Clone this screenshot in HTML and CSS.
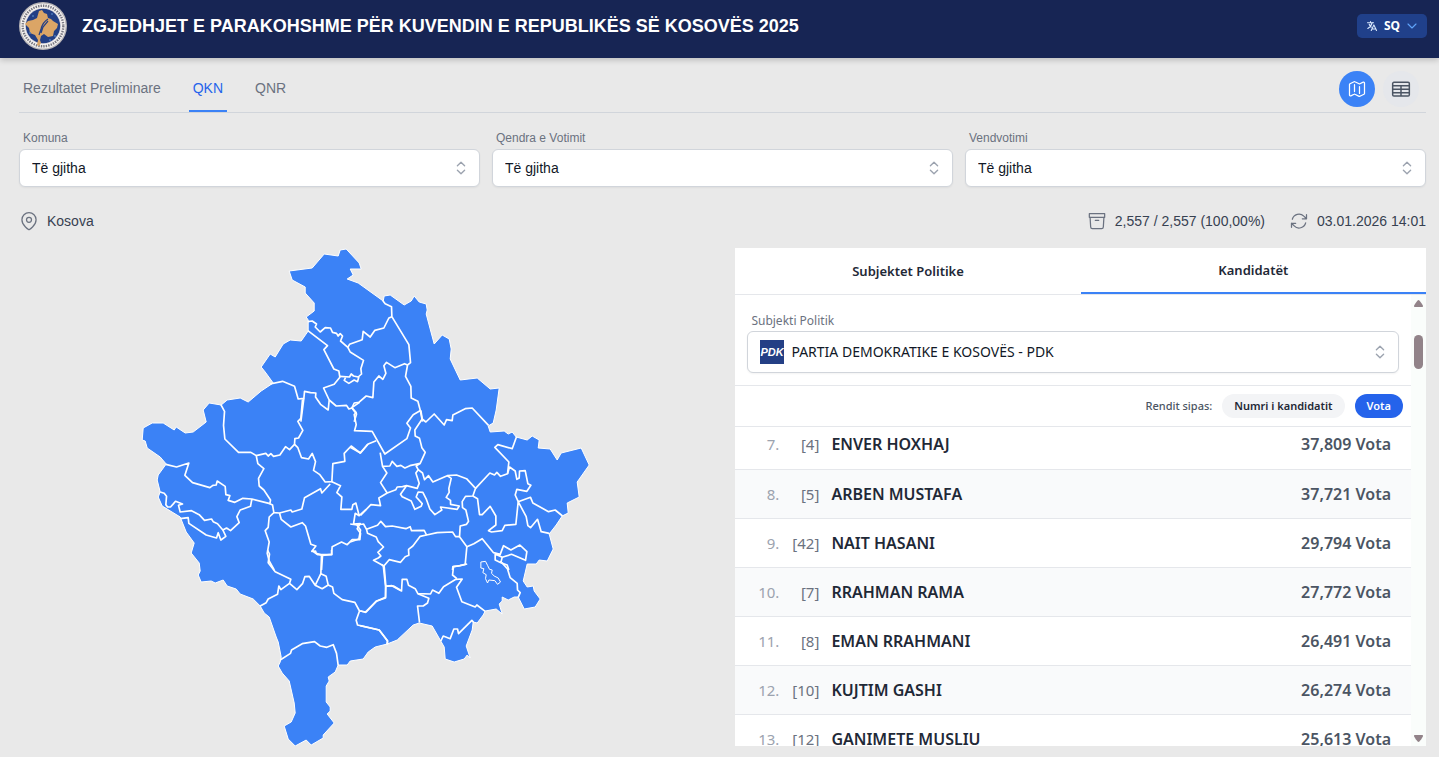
FILE: index.html
```html
<!DOCTYPE html>
<html lang="sq">
<head>
  <meta charset="UTF-8">
  <meta name="viewport" content="width=device-width, initial-scale=1">
  <title>Zgjedhjet e Parakohshme 2025</title>
  <link rel="stylesheet" href="styles.css">
</head>
<body>
  <header class="header">
    <svg class="seal" viewBox="0 0 48 48" aria-hidden="true">
      <circle cx="24" cy="24" r="24" fill="#b9b6b8"/>
      <circle cx="24" cy="24" r="22.6" fill="#f4f1ef"/>
      <circle cx="24" cy="24" r="20.3" fill="none" stroke="#77767f" stroke-width="2.4" stroke-dasharray="1.4 1.1"/>
      <circle cx="24" cy="24" r="18" fill="#d9d6dc"/>
      <circle cx="24" cy="24" r="17.2" fill="#233f85"/>
      <path fill="#dba566" d="M20 9l3-1 2 3 3 1 1 4 3 1 2 2 5 3-1 4-3 3-1 5-5 1-4-3-3 2-1 4 1 3-2 3-2-1 1-5-3-5-5-2-1-5-4-4 3-3 5-1 4-2z"/>
      <path d="M29 17c-5 3-6 6-7 10l-2 6M29 19l-5 6-2 6" fill="none" stroke="#233f85" stroke-width="1.2"/>
      <g fill="#4c78b8"><circle cx="14" cy="14" r="1"/><circle cx="33" cy="12" r="1"/><circle cx="11" cy="31" r="1"/><circle cx="36" cy="34" r="1"/><circle cx="31" cy="38" r="1"/></g>
    </svg>
    <h1 class="title">ZGJEDHJET E PARAKOHSHME PËR KUVENDIN E REPUBLIKËS SË KOSOVËS 2025</h1>
    <button class="lang" type="button">
      <svg width="12" height="12" viewBox="0 0 24 24" fill="none" stroke="#dbeafe" stroke-width="2.2" stroke-linecap="round" stroke-linejoin="round"><path d="M10.5 21l5.250-11.250L21 21m-9-3h7.500M3 5.600a48.500 48.500 0 0 1 12 0M9 3v2.300m3.300 0C11.200 10.300 7.900 14.500 3.600 17M12.300 5.300c.9.100 1.800.200 2.700.300M10.400 14.500A18 18 0 0 1 6.400 8.500"/></svg>
      <span>SQ</span>
      <svg width="12" height="12" viewBox="0 0 24 24" fill="none" stroke="#60a5fa" stroke-width="2.2" stroke-linecap="round" stroke-linejoin="round"><path d="M4 8l8 8 8-8"/></svg>
    </button>
  </header>

  <main class="page">
    <div class="nav-row">
      <nav class="nav">
        <a href="#preliminare">Rezultatet Preliminare</a>
        <a href="#qkn" class="active">QKN</a>
        <a href="#qnr">QNR</a>
      </nav>
      <div class="view-buttons">
        <button class="round active" type="button" aria-label="Harta">
          <svg width="20" height="20" viewBox="0 0 24 24" fill="none" stroke="currentColor" stroke-width="1.5" stroke-linecap="round" stroke-linejoin="round"><path d="M9 6.750V15m6-6v8.250m.5 3.500l4.900-2.400c.4-.2.600-.6.600-1V4.800c0-.8-.9-1.400-1.600-1l-3.900 1.900c-.3.200-.7.200-1 0L9.500 3.300a1.100 1.100 0 0 0-1 0L3.600 5.700c-.4.200-.6.600-.6 1v12.500c0 .8.900 1.400 1.600 1l3.900-1.900c.3-.2.700-.2 1 0l5 2.500c.3.200.7.200 1-.1z"/></svg>
        </button>
        <button class="round" type="button" aria-label="Tabela">
          <svg width="20" height="20" viewBox="0 0 24 24" fill="none" stroke="currentColor" stroke-width="1.8" stroke-linejoin="round"><rect x="2" y="4" width="20" height="16.500" rx="1.500"/><path d="M2 8h20M2 12.200h20M2 16.400h20M12 8v12.500"/></svg>
        </button>
      </div>
    </div>

    <form class="filters">
      <div class="field">
        <label for="komuna">Komuna</label>
        <div class="select-box">
          <select id="komuna"><option>Të gjitha</option></select>
          <svg class="updown" viewBox="0 0 20 20"><path d="M6 7.500L10 3.500l4 4M6 12.500l4 4 4-4"/></svg>
        </div>
      </div>
      <div class="field">
        <label for="qendra">Qendra e Votimit</label>
        <div class="select-box">
          <select id="qendra"><option>Të gjitha</option></select>
          <svg class="updown" viewBox="0 0 20 20"><path d="M6 7.500L10 3.500l4 4M6 12.500l4 4 4-4"/></svg>
        </div>
      </div>
      <div class="field">
        <label for="vendvotimi">Vendvotimi</label>
        <div class="select-box">
          <select id="vendvotimi"><option>Të gjitha</option></select>
          <svg class="updown" viewBox="0 0 20 20"><path d="M6 7.500L10 3.500l4 4M6 12.500l4 4 4-4"/></svg>
        </div>
      </div>
    </form>

    <div class="info">
      <div class="info-item place">
        <svg viewBox="0 0 24 24"><path d="M15 10.500a3 3 0 1 1-6 0 3 3 0 0 1 6 0z"/><path d="M20.500 10.500C20.500 17.600 12 22.500 12 22.500S3.500 17.600 3.500 10.500a8.500 8.500 0 0 1 17 0z"/></svg>
        <span>Kosova</span>
      </div>
      <div class="info-item">
        <svg viewBox="0 0 24 24"><path d="M20.300 7.500l-.7 11.600a2 2 0 0 1-2 1.900H6.400a2 2 0 0 1-2-1.900L3.700 7.500M10 11.300h4M2.800 3.200h18.400v4.300H2.800z"/></svg>
        <span>2,557 / 2,557 (100,00%)</span>
      </div>
      <div class="info-item">
        <svg viewBox="0 0 24 24"><path d="M16 9.300h5V4.400M3 19.600v-4.900h5M3 14.700l3.200 3.200a8.200 8.200 0 0 0 13.800-3.700M4 9.900A8.200 8.200 0 0 1 17.800 6.200L21 9.300"/></svg>
        <span>03.01.2026 14:01</span>
      </div>
    </div>

    <div class="content">
      <div class="map">
        <svg viewBox="140 248 450 498" role="img" aria-label="Harta e Kosovës">
          <path class="country" d="M289 271L312 268 324 254 338 256 340 250 346 249 359 263 361 269 350 269 353 275 347 279 358 283 383 301 384 296 390 295 404 305 411 301 414 296 419 302 426 304 427 310 426 314 434 344 442 335 449 339 451 349 450 359 460 380 477 378 490 389 499 388 496 410 493 423 488 426 490 432 504 431 508 434 512 432 516 437 527 440 532 436 539 440 538 448 550 449 557 460 561 453 581 448 589 465 577 482 579 497 567 503 568 513 562 516 556 525 549 534 553 549 547 561 539 560 536 564 527 564 523 581 527 587 533 586 534 591 540 599 535 607 524 609 518 597 514 597 508 600 502 597 502 601 499 604 502 614 496 609 485 611 483 615 477 623 473 622 472 630 469 638 466 646 470 658 467 655 464 659 454 662 445 659 444 647 432 626 419 623 413 625 397 640 387 644 375 647 368 652 363 659 350 661 347 665 338 665 335 672 328 677 329 681 326 686 326 702 330 707 330 711 327 714 334 723 323 735 323 738 311 745 306 740 295 746 288 739 284 726 291 722 295 713 294 703 289 681 282 673 278 666 280 662 281 657 278 642 276 637 269 617 264 613 260 606 253 599 240 594 236 589 227 586 223 580 215 583 211 581 201 582 198 575 200 571 199 563 191 553 194 543 186 532 180 517 162 506 158 497 160 492 157 480 158 475 166 464 160 457 147 448 145 441 142 440 143 428 152 423 163 423 174 430 176 427 185 433 193 432 206 422 203 410 209 403 221 405 227 400 240 398 248 402 261 391 273 383 265 372 261 367 270 354 275 357 283 344 290 340 301 341 308 331 308 320 306 317 314 311 314 303 305 293 305 287 292 280Z"/>
          <!-- north -->
          <g class="border" transform="translate(270 240) scale(0.33333)">
            <path d="M338 182L345 191 364 200 365 230 416 314 421 368 412 375 406 409 422 439 423 474 443 484 450 510 457 545"/>
            <path d="M365 230L356 234 341 264 314 271 300 291 279 274 276 299 238 313 233 322 211 303 217 288 210 281 204 288 199 280 187 277 181 264 165 263 150 276 135 261 139 252 126 243 113 245"/>
            <path d="M113 272L172 317 161 329 191 387 206 393 209 412 192 433 160 444 177 480 174 510 151 493 136 471 137 459 121 458 103 454 101 475 84 477 73 439 37 424 0 432"/>
            <path d="M233 322L240 336 280 361 272 386 274 402 264 411 250 408 243 402 238 411 209 409M226 413L222 421 236 430 252 420 262 425 266 410"/>
            <path d="M177 480L198 498 229 496 236 507 245 504 252 489 266 487 288 468 308 473 311 426 326 408 338 418 347 400 341 377 349 367 374 383 403 371 412 375"/>
            <path d="M245 504L259 522 252 545M101 475L92 545"/>
          </g>
          <!-- west -->
          <g class="border" transform="translate(130 370) scale(0.33333)">
            <path d="M272 104L283 124 280 166 284 207 325 247 362 247 378 257 383 281 401 296 385 325 387 348 401 360 421 390 419 401 427 405 431 428 448 429 482 420 486 426 515 417 523 383 571 356 575 369 600 342"/>
            <path d="M378 257L407 250 414 258 422 251 430 259 449 255 466 230 478 239 493 223 494 206 505 204 518 181 503 154 512 145 517 88"/>
            <path d="M493 223L503 233 514 263 535 267 546 250 556 275 550 301 569 314 585 336 605 335 608 281 644 274 642 250 663 228 690 249 713 222"/>
            <path d="M605 335L631 347 620 368 635 381 632 418 665 418 668 404 677 399 687 437 708 418M687 437L675 430 670 462 690 461 681 476 691 490 689 509 666 509 651 524 634 516 606 530 604 553 577 556 574 600"/>
            <path d="M577 556L558 550 556 543 545 544 557 528 542 523 526 468 516 458 482 471 453 448 448 429"/>
            <path d="M431 428L417 441 414 472 405 482 417 516 411 550 417 573 432 600"/>
            <path d="M107 283L139 291 176 279 164 316 187 338 239 353 248 346 258 345 261 333 285 349 287 374 299 377 294 391 314 397 338 385 365 387 419 401M365 387L361 409 330 420 320 440 327 458 301 482 289 474 278 480 262 461 249 455 244 447 223 451 207 434 184 422 150 426 145 406 157 402 136 394 130 401 121 411 112 411 107 404 109 379 102 370 90 366"/>
            <path d="M278 480L287 499 272 510 264 488 259 504 228 495 176 460 174 443 150 446"/>
          </g>
          <!-- east -->
          <g class="border" transform="translate(350 370) scale(0.33333)">
            <path d="M212 121L216 147 227 156 252 132 282 165 289 149 306 152 308 135 345 116 366 114 415 166M212 121L189 134 170 160 181 174 170 206 104 252 66 184 13 182 18 164 12 134 18 128 5 113 28 97"/>
            <path d="M216 147L194 180 195 198 208 205 215 233 225 247 210 280 179 287 164 294 152 286 140 289 126 274 119 288 97 289 90 248"/>
            <path d="M97 289L110 309 91 338 111 369 137 359 141 351 157 350 169 347 201 355 207 340 197 309 204 299 198 288 210 280"/>
            <path d="M204 299L217 309 223 329 235 317 248 336 291 317 319 315 349 326 376 355 368 378 346 379 336 395 337 413 347 420 355 454 349 463 330 468 328 500 350 530 345 583 325 588 308 590 307 600"/>
            <path d="M291 317L303 325 296 355 297 367 288 382 301 391 301 403 327 408 321 418 271 411 275 420 254 434 239 417 229 389 218 367 204 366 198 381 216 401 213 409 194 418 183 393 156 380 151 373 169 347"/>
            <path d="M376 355L419 309 433 315 440 307 451 319 472 311 476 276 434 232 443 224 486 236 499 200"/>
            <path d="M472 311L478 291 495 303 500 328 507 324 508 303 525 302 533 341 542 346 530 364 500 358 495 375 504 395 541 382 548 399 595 425 615 420 637 438"/>
            <path d="M504 395L497 463 464 466 456 482 424 486 415 482 437 465 437 438 420 409 396 434 388 434 382 386 368 378M504 395L528 440 533 467 541 473 562 448 573 485 597 490"/>
            <path d="M111 369L86 384 91 407 62 404 31 436 M0 462L20 465 40 462 49 478 82 466 92 454 106 470 126 468 167 476 180 470 184 482 222 481 229 495 261 488 307 486 316 500 328 500"/>
            <path d="M49 478L52 490 78 501 84 515 100 531 83 547 92 558 84 564 70 571 101 588 117 569 151 577 165 560 176 556 175 538 188 528 210 499 229 495"/>
            <path d="M350 530L371 521 396 506 430 548 450 553 460 527 482 540 509 525 530 545 526 571 484 553 456 562 435 552 435 570 452 578 456 562M452 578L471 585 476 600"/>
            <path d="M0 232L31 249 54 222 78 212M20 465L31 480 26 507 0 516"/>
          </g>
          <!-- south-east -->
          <g class="border" transform="translate(360 500) scale(0.33333)">
            <path d="M69 195L76 259 76 292 48 304 15 337 0 332M76 259L95 257 124 273 126 238 140 238 145 256 165 266 173 281 211 282 217 270 236 280 250 260 287 238 306 237 289 262 305 305 345 321 350 315 375 334"/>
            <path d="M321 192L299 197 280 200 277 225 290 236M173 281L206 295 202 309 189 318 172 318 178 368"/>
            <path d="M242 423L249 408 270 416 281 387 292 387 295 401 335 361 340 367M0 377L57 390 82 422 80 434M425 188L442 207 450 233 471 250 472 270 480 278 474 292"/>
            <path class="thin" d="M362 186L376 184 382 196 388 208 396 210 394 220 402 228 414 234 421 246 412 253 404 242 386 240 382 249 376 236 378 224 368 218 371 206 362 204Z"/>
          </g>
          <!-- south -->
          <g class="border" transform="translate(180 550) scale(0.33333)">
            <path d="M240 168L258 158 264 147 292 133 296 108 302 119 328 100 332 88 285 65 264 38 268 12 262 0M328 100L350 119 367 101 374 80 387 79 405 106 422 71 424 15"/>
            <path d="M422 71L438 79 444 105 426 116 405 106M444 105L457 111 461 130 486 149 524 157 538 183 558 186 588 154 616 144 617 108 612 50 605 44M538 183L528 211 532 225 597 240 622 273 622 283"/>
            <path d="M617 108L640 108 660 120M300 330L331 310 334 300 366 281 403 275 420 288 440 292 459 284 469 310 474 346M395 2L412 14 455 14 454 0"/>
          </g>
        </svg>
      </div>

      <section class="panel">
        <div class="tabs">
          <button type="button">Subjektet Politike</button>
          <button type="button" class="active">Kandidatët</button>
        </div>
        <div class="panel-body">
          <div class="panel-main">
            <div class="party">
              <label for="party">Subjekti Politik</label>
              <div class="select-box">
                <svg class="party-logo" viewBox="0 0 24 24" aria-hidden="true"><rect width="24" height="24" fill="#243f85"/><text x="12" y="16" text-anchor="middle" fill="#fff">PDK</text></svg>
                <select id="party"><option>PARTIA DEMOKRATIKE E KOSOVËS - PDK</option></select>
                <svg class="updown" viewBox="0 0 20 20"><path d="M6 7.500L10 3.500l4 4M6 12.500l4 4 4-4"/></svg>
              </div>
            </div>
            <div class="sort">
              <span>Rendit sipas:</span>
              <button type="button">Numri i kandidatit</button>
              <button type="button" class="active">Vota</button>
            </div>
            <div class="list">
              <table>
                <tr><td class="rank">7.</td><td class="number">[4]</td><td class="name">ENVER HOXHAJ</td><td class="votes">37,809 Vota</td></tr>
                <tr><td class="rank">8.</td><td class="number">[5]</td><td class="name">ARBEN MUSTAFA</td><td class="votes">37,721 Vota</td></tr>
                <tr><td class="rank">9.</td><td class="number">[42]</td><td class="name">NAIT HASANI</td><td class="votes">29,794 Vota</td></tr>
                <tr><td class="rank">10.</td><td class="number">[7]</td><td class="name">RRAHMAN RAMA</td><td class="votes">27,772 Vota</td></tr>
                <tr><td class="rank">11.</td><td class="number">[8]</td><td class="name">EMAN RRAHMANI</td><td class="votes">26,491 Vota</td></tr>
                <tr><td class="rank">12.</td><td class="number">[10]</td><td class="name">KUJTIM GASHI</td><td class="votes">26,274 Vota</td></tr>
                <tr><td class="rank">13.</td><td class="number">[12]</td><td class="name">GANIMETE MUSLIU</td><td class="votes">25,613 Vota</td></tr>
              </table>
            </div>
          </div>
          <div class="scrollbar">
            <svg width="9" height="7" viewBox="0 0 9 7"><path d="M4.500 0C5.500 0 9 5 9 6c0 .7-.3 1-1 1H1c-.7 0-1-.3-1-1C0 5 3.500 0 4.500 0z"/></svg>
            <div class="thumb"></div>
            <svg width="9" height="7" viewBox="0 0 9 7"><path d="M4.500 7C5.500 7 9 2 9 1c0-.7-.3-1-1-1H1C.3 0 0 .3 0 1c0 1 3.500 6 4.500 6z"/></svg>
          </div>
        </div>
      </section>
    </div>
  </main>
</body>
</html>
```
FILE: styles.css
```css
* {
  box-sizing: border-box;
}
body {
  margin: 0;
  height: 100vh;
  display: flex;
  flex-direction: column;
  overflow: hidden;
  background-color: #e9e9e9;
  font-family: "Liberation Sans", Arial, sans-serif;
  font-size: 14px;
  line-height: 20px;
  color: #1f2937;
}
button, select {
  font: inherit;
  cursor: pointer;
}

/* Header */
.header {
  display: flex;
  align-items: center;
  height: 58px;
  flex-shrink: 0;
  padding: 0 12px 6px 19px;
  background-color: #172554;
  box-shadow: 0 2px 6px rgba(0, 0, 0, 0.2);
}
.seal {
  width: 48px;
  height: 48px;
  margin-right: 15px;
}
.title {
  flex: 1;
  margin: 0;
  color: #fff;
  font-size: 18px;
  line-height: 28px;
}
.lang {
  display: flex;
  align-items: center;
  gap: 6px;
  height: 24px;
  padding: 0 9px;
  border: none;
  border-radius: 5px;
  background-color: #20408a;
  color: #fff;
  font-family: "Noto Sans", sans-serif;
  font-size: 12px;
  font-weight: bold;
}

.page {
  flex: 1;
  min-height: 0;
  display: flex;
  flex-direction: column;
  padding: 0 13px 11px 19px;
}

/* Navigation */
.nav-row {
  display: flex;
  justify-content: space-between;
  height: 55px;
  border-bottom: 1px solid #d1d5db;
}
.nav {
  display: flex;
  gap: 24px;
}
.nav a {
  height: 54px;
  padding: 20px 4px 12px;
  border-bottom: 2px solid transparent;
  color: #6b7280;
  text-decoration: none;
}
.nav a.active {
  color: #2563eb;
  border-color: #3b82f6;
}
.view-buttons {
  display: flex;
  gap: 8px;
  padding: 13px 7px 0 0;
}
.round {
  display: flex;
  align-items: center;
  justify-content: center;
  width: 36px;
  height: 36px;
  padding: 0;
  border: none;
  border-radius: 50%;
  background-color: #e5e7eb;
  color: #4b5563;
}
.round.active {
  background-color: #3b82f6;
  color: #fff;
}

/* Filters */
.filters {
  display: grid;
  grid-template-columns: repeat(3, 1fr);
  gap: 12px;
  padding-top: 15px;
}
.field label, .party label {
  display: block;
  padding-left: 4px;
  color: #6b7280;
  font-size: 12px;
}
.field label {
  margin-bottom: 1px;
}
.select-box {
  position: relative;
}
.select-box select {
  display: block;
  width: 100%;
  height: 38px;
  padding: 0 40px 0 12px;
  appearance: none;
  border: 1px solid #d1d5db;
  border-radius: 6px;
  background-color: #fff;
  box-shadow: 0 1px 2px rgba(0, 0, 0, 0.05);
  color: #111827;
}
.updown {
  position: absolute;
  top: 50%;
  right: 10px;
  width: 18px;
  height: 18px;
  margin-top: -9px;
  fill: none;
  stroke: #9ca3af;
  stroke-width: 1.5;
  stroke-linecap: round;
  stroke-linejoin: round;
  pointer-events: none;
}

/* Info line */
.info {
  display: flex;
  gap: 24px;
  padding: 24px 0 17px;
}
.info-item {
  display: flex;
  align-items: center;
  gap: 8px;
  color: #374151;
}
.info-item svg {
  width: 20px;
  height: 20px;
  fill: none;
  stroke: #6b7280;
  stroke-width: 1.5;
  stroke-linecap: round;
  stroke-linejoin: round;
}
.place {
  margin-right: auto;
}

.content {
  flex: 1;
  min-height: 0;
  display: grid;
  grid-template-columns: 51fr 50fr;
  grid-template-rows: 100%;
  gap: 12px;
}

/* Map */
.map {
  min-height: 0;
  padding-right: 12px;
}
.map svg {
  display: block;
  width: 100%;
  height: 100%;
}
.country {
  fill: #3b82f6;
  stroke: #fff;
  stroke-width: 1;
  stroke-linejoin: round;
}
.border {
  fill: none;
  stroke: #fff;
  stroke-width: 5;
  stroke-linejoin: round;
}
.thin {
  stroke-width: 3;
}

/* Results panel */
.panel {
  display: flex;
  flex-direction: column;
  min-height: 0;
  background-color: #fff;
  font-family: "Noto Sans", sans-serif;
}
.tabs {
  display: flex;
  height: 47px;
  flex-shrink: 0;
  border-bottom: 1px solid #e5e7eb;
}
.tabs button {
  flex: 1;
  border: none;
  background: none;
  color: #1f2937;
  font-size: 13px;
  font-weight: 600;
}
.tabs .active {
  border-bottom: 2px solid #3b82f6;
}
.panel-body {
  flex: 1;
  min-height: 0;
  display: flex;
}
.panel-main {
  flex: 1;
  display: flex;
  flex-direction: column;
  overflow: hidden;
}
.party {
  padding: 16px 12px 12px;
  border-bottom: 1px solid #e5e7eb;
}
.party select {
  height: 42px;
  padding-left: 43px;
}
.party-logo {
  position: absolute;
  top: 9px;
  left: 13px;
  width: 24px;
  height: 24px;
}
.party-logo text {
  font-family: "Liberation Sans", Arial, sans-serif;
  font-size: 11px;
  font-style: italic;
  font-weight: bold;
}
.sort {
  display: flex;
  align-items: center;
  justify-content: flex-end;
  gap: 10px;
  height: 41px;
  flex-shrink: 0;
  padding-right: 8px;
  border-bottom: 1px solid #e5e7eb;
  color: #4b5563;
  font-size: 11px;
  font-weight: 500;
}
.sort button {
  height: 24px;
  padding: 0 12px;
  border: none;
  border-radius: 12px;
  background-color: #f3f4f6;
  color: #1f2937;
  font-weight: 600;
}
.sort .active {
  background-color: #2563eb;
  color: #fff;
}
.list {
  flex: 1;
  min-height: 0;
  overflow: hidden;
}
/* the list is scrolled a little under the sort bar */
.list table {
  width: 100%;
  margin-top: -7px;
  border-collapse: collapse;
  font-size: 15px;
}
.list tr {
  height: 49px;
  border-bottom: 1px solid #e5e7eb;
}
.list tr:nth-child(even) {
  background-color: #f9fafb;
}
.list td {
  padding: 0;
}
.list .rank {
  width: 44px;
  text-align: right;
  color: #9ca3af;
}
.list .number {
  width: 40px;
  text-align: right;
  color: #6b7280;
}
.list .name {
  padding-left: 12px;
  font-size: 16px;
  font-weight: 600;
}
.list .votes {
  padding-right: 20px;
  text-align: right;
  color: #4b5563;
  font-size: 16px;
  font-weight: 600;
}

.scrollbar {
  display: flex;
  flex-direction: column;
  align-items: center;
  width: 15px;
  padding: 5px 0 4px;
  background-color: #fafdfb;
  fill: #928389;
}
.thumb {
  width: 9px;
  height: 34px;
  margin: 28px 0 auto;
  border-radius: 5px;
  background-color: #928389;
}
```
